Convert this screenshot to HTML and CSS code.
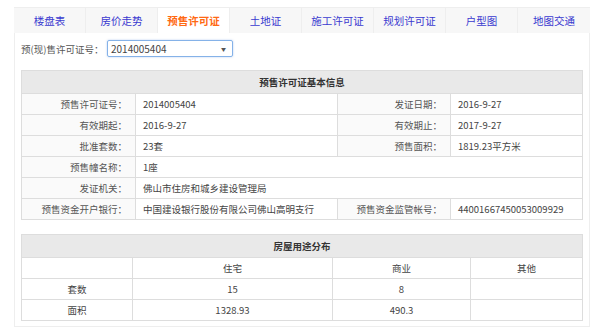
FILE: index.html
```html
<!DOCTYPE html>
<html lang="zh-CN">
<head>
    <meta charset="UTF-8">
    <title>预售许可证</title>
    <link rel="stylesheet" href="styles.css">
</head>
<body>
    <div class="wrap">
        <ul class="tabs">
            <li>楼盘表</li>
            <li>房价走势</li>
            <li class="active">预售许可证</li>
            <li>土地证</li>
            <li>施工许可证</li>
            <li>规划许可证</li>
            <li>户型图</li>
            <li>地图交通</li>
        </ul>
        <div class="panel">
            <div class="pick">
                <span class="pick-label">预(现)售许可证号：</span>
                <div class="select">
                    <span>2014005404</span>
                    <span class="arrow">&#9660;</span>
                </div>
            </div>

            <table class="info">
                <colgroup>
                    <col style="width:114px"><col style="width:202px"><col style="width:113px"><col>
                </colgroup>
                <thead>
                    <tr><th colspan="4">预售许可证基本信息</th></tr>
                </thead>
                <tbody>
                    <tr><td class="k">预售许可证号：</td><td>2014005404</td><td class="k">发证日期：</td><td>2016-9-27</td></tr>
                    <tr><td class="k">有效期起：</td><td>2016-9-27</td><td class="k">有效期止：</td><td>2017-9-27</td></tr>
                    <tr><td class="k">批准套数：</td><td>23套</td><td class="k">预售面积：</td><td>1819.23平方米</td></tr>
                    <tr><td class="k">预售幢名称：</td><td colspan="3">1座</td></tr>
                    <tr><td class="k">发证机关：</td><td colspan="3">佛山市住房和城乡建设管理局</td></tr>
                    <tr><td class="k">预售资金开户银行：</td><td>中国建设银行股份有限公司佛山高明支行</td><td class="k">预售资金监管帐号：</td><td>44001667450053009929</td></tr>
                </tbody>
            </table>

            <table class="usage">
                <colgroup>
                    <col style="width:111px"><col style="width:200px"><col style="width:138px"><col>
                </colgroup>
                <thead>
                    <tr><th colspan="4">房屋用途分布</th></tr>
                </thead>
                <tbody>
                    <tr><td></td><td>住宅</td><td>商业</td><td>其他</td></tr>
                    <tr><td>套数</td><td>15</td><td>8</td><td></td></tr>
                    <tr><td>面积</td><td>1328.93</td><td>490.3</td><td></td></tr>
                </tbody>
            </table>
        </div>
    </div>
</body>
</html>
```

FILE: styles.css
```css
/* page */
body {
    margin: 0;
    padding: 0;
    background-color: #fff;
    font-family: "Noto Sans CJK SC", "Microsoft YaHei", sans-serif;
    font-size: 9.5px;
    color: #555;
}
.wrap {
    width: 576px;
    margin: 7px 0 0 14px;
}

/* tabs */
.tabs {
    display: flex;
    list-style: none;
    margin: 0;
    padding: 0;
    background-color: #f7f7f7;
    border-top: 1px solid #eee;
}
.tabs li {
    width: 72px;
    height: 25px;
    line-height: 25px;
    text-align: center;
    font-size: 10.5px;
    color: #3a3ad0;
    border-right: 1px solid #eee;
    box-sizing: border-box;
}
.tabs li:last-child {
    border-right: none;
}
.tabs li.active {
    background-color: #fff;
    color: #ff6a13;
    font-weight: bold;
}

/* panel */
.panel {
    border: 1px solid #eee;
    border-top: none;
    padding: 7px 6px 5px 6px;
}
.pick {
    display: flex;
    align-items: center;
    height: 17px;
    margin-bottom: 13px;
}
.pick-label {
    color: #555;
    width: 86px;
}
.select {
    display: flex;
    align-items: center;
    justify-content: space-between;
    width: 126px;
    height: 17px;
    box-sizing: border-box;
    border: 1px solid #85b2e8;
    border-radius: 2px;
    box-shadow: 0 0 2px rgba(100, 150, 230, 0.5);
    padding: 0 6px 0 3px;
    color: #444;
    font-size: 10px;
}
.select .arrow {
    font-size: 5px;
    color: #555;
}

/* tables */
table {
    width: 562px;
    border-collapse: collapse;
    table-layout: fixed;
}
th, td {
    border: 1px solid #ddd;
    height: 20px;
    padding: 0 7px;
    color: #444;
    white-space: nowrap;
    overflow: hidden;
}
th {
    height: 22px;
    background-color: #e9e9e9;
    color: #333;
    font-weight: bold;
    text-align: center;
}
.info {
    margin-bottom: 14px;
}
.info td {
    text-align: left;
}
.info td.k {
    text-align: right;
    padding-right: 8px;
    color: #555;
    background-color: #fafafa;
}
.usage td {
    text-align: center;
}
```
